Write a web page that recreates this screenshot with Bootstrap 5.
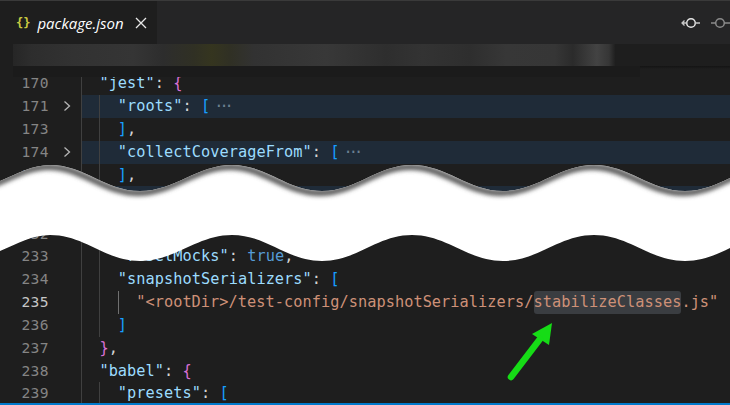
<!DOCTYPE html>
<html lang="en">
<head>
<meta charset="utf-8">
<title>package.json</title>
<link href="https://cdn.jsdelivr.net/npm/bootstrap@5.3.0/dist/css/bootstrap.min.css" rel="stylesheet">
<style>
body{background:#1e1e1e;overflow:hidden}
.shot{height:405px;width:730px;border-top:1px solid #3a3a3a}
.tabbar{height:43px;background:#252526;flex:none}
.edit-tab{width:157px;background:#1e1e1e;color:#fff;font:italic 15px "Open Sans",sans-serif}
.tab-icon{color:#cbcb41;font:bold 12px "DejaVu Sans Mono",monospace;margin:0 7px 0 16px}
.tab-close{margin-left:11px}
.act{margin-right:-1px;gap:8px;padding-right:0}
.crumbs{height:33px;flex:none;background:#1e1e1e;padding-left:13px}
.crumb-blur{width:602px;height:22px;background:linear-gradient(90deg,#262626 0,#2d2d2d 3%,#323232 10%,#353535 20%,#2d2d2d 25%,#303024 30%,#35351f 33%,#303024 36%,#323232 40%,#383838 52%,#2e2e2e 62%,#333333 68%,#2e2e2e 76%,#373737 82%,#363636 90%,#2b2b2b 93%,#434343 97%,#363636 99%,#202020 100%)}
.crumb-fade{height:11px;width:627px;background:#1b1b1b}
.crumb-edge{position:absolute;left:640px;right:0;top:22px;height:3px;background:linear-gradient(#141414,#1e1e1e)}
.editor{flex:1 1 auto;min-height:0;font:15.28px/22.83px "DejaVu Sans Mono",monospace;letter-spacing:.05px;color:#d4d4d4;margin-top:-4.8px}
.cline{height:22.83px;white-space:pre}
.ln{width:49px;text-align:right;color:#858585;flex:none;font-size:14.6px;letter-spacing:.4px}
.ln-on{color:#c6c6c6}
.fold{width:32px;flex:none;padding-left:14px}
.src{flex:1 1 auto;min-width:0}
.folded{background:#1f2b38}
.ig{display:inline-block;width:18.4px;height:22.83px;border-left:1px solid #404040;vertical-align:top}
.ig-on{border-left-color:#707070}
.second{margin-top:13.4px}
.k{color:#9cdcfe}.s{color:#ce9178}.t{color:#569cd6}.b1{color:#da70d6}.b2{color:#179fff}
.dots{color:#6b7f90;letter-spacing:-4px;margin-left:4px}
.hit{background:#3a3d41;border-radius:3px;display:inline-block}
.statusline{height:2px;background:#007acc;flex:none;position:relative}
.tear{position:absolute;left:0;top:0;width:730px;height:405px;pointer-events:none}
</style>
</head>
<body class="m-0">
<div class="shot d-flex flex-column position-relative overflow-hidden">
  <div class="tabbar d-flex justify-content-between align-items-center">
    <div class="edit-tab h-100 d-flex align-items-center"><span class="tab-icon">{}</span><span>package.json</span>
      <svg class="tab-close" width="12" height="12" viewBox="0 0 12 12"><path d="M1 1 11 11M11 1 1 11" stroke="#e8e8e8" stroke-width="1.3" fill="none"/></svg>
    </div>
    <div class="act d-flex align-items-center">
      <svg width="22" height="14" viewBox="0 0 22 14"><circle cx="11" cy="7" r="4.3" fill="none" stroke="#e6e6e6" stroke-width="1.5"/><path d="M15 7h5M7 7H2M4.500 4.500 2 7l2.500 2.500" fill="none" stroke="#c8c8c8" stroke-width="1.300"/></svg>
      <svg width="21" height="14" viewBox="0 0 21 14"><circle cx="10" cy="7" r="4.300" fill="none" stroke="#8a8a8a" stroke-width="1.500"/><path d="M1 7h5M14 7h7" fill="none" stroke="#8a8a8a" stroke-width="1.300"/></svg>
    </div>
  </div>
  <div class="crumbs position-relative">
    <div class="crumb-blur"></div>
    <div class="crumb-fade"></div>
    <div class="crumb-edge"></div>
  </div>
  <div class="editor overflow-hidden">
    <div class="cline d-flex"><span class="ln">170</span><span class="fold"></span><span class="src"><span class="ig"></span><span class="k">"jest"</span>: <span class="b1">{</span></span></div>
    <div class="cline d-flex"><span class="ln">171</span><span class="fold d-flex align-items-center"><svg width="9" height="12" viewBox="0 0 9 12"><path d="M1.500 1.500 6.500 6l-5 4.500" fill="none" stroke="#b5b5b5" stroke-width="1.300"/></svg></span><span class="src folded"><span class="ig"></span><span class="ig"></span><span class="k">"roots"</span>: <span class="b2">[</span><span class="dots">···</span></span></div>
    <div class="cline d-flex"><span class="ln">173</span><span class="fold"></span><span class="src"><span class="ig"></span><span class="ig"></span><span class="b2">]</span>,</span></div>
    <div class="cline d-flex"><span class="ln">174</span><span class="fold d-flex align-items-center"><svg width="9" height="12" viewBox="0 0 9 12"><path d="M1.500 1.500 6.500 6l-5 4.500" fill="none" stroke="#b5b5b5" stroke-width="1.300"/></svg></span><span class="src folded"><span class="ig"></span><span class="ig"></span><span class="k">"collectCoverageFrom"</span>: <span class="b2">[</span><span class="dots">···</span></span></div>
    <div class="cline d-flex"><span class="ln">175</span><span class="fold"></span><span class="src"><span class="ig"></span><span class="ig"></span><span class="b2">]</span>,</span></div>
    <div class="cline d-flex"><span class="ln"></span><span class="fold"></span><span class="src folded"><span class="ig"></span><span class="ig"></span></span></div>
    <div class="second">
      <div class="cline d-flex"><span class="ln">232</span><span class="fold"></span><span class="src"><span class="ig"></span><span class="ig"></span></span></div>
      <div class="cline d-flex"><span class="ln">233</span><span class="fold"></span><span class="src"><span class="ig"></span><span class="ig"></span><span class="k">"resetMocks"</span>: <span class="t">true</span>,</span></div>
      <div class="cline d-flex"><span class="ln">234</span><span class="fold"></span><span class="src"><span class="ig"></span><span class="ig"></span><span class="k">"snapshotSerializers"</span>: <span class="b2">[</span></span></div>
      <div class="cline d-flex"><span class="ln ln-on">235</span><span class="fold"></span><span class="src"><span class="ig"></span><span class="ig"></span><span class="ig ig-on"></span><span class="s">"&lt;rootDir&gt;/test-config/snapshotSerializers/<span class="hit">stabilizeClasses</span>.js"</span></span></div>
      <div class="cline d-flex"><span class="ln">236</span><span class="fold"></span><span class="src"><span class="ig"></span><span class="ig"></span><span class="b2">]</span></span></div>
      <div class="cline d-flex"><span class="ln">237</span><span class="fold"></span><span class="src"><span class="ig"></span><span class="b1">}</span>,</span></div>
      <div class="cline d-flex"><span class="ln">238</span><span class="fold"></span><span class="src"><span class="ig"></span><span class="k">"babel"</span>: <span class="b1">{</span></span></div>
      <div class="cline d-flex"><span class="ln">239</span><span class="fold"></span><span class="src"><span class="ig"></span><span class="ig"></span><span class="k">"presets"</span>: <span class="b2">[</span></span></div>
    </div>
  </div>
  <div class="statusline"></div>
  <svg class="tear" viewBox="0 0 730 405" aria-hidden="true">
    <defs>
      <filter id="soft" x="-5%" y="-50%" width="110%" height="200%"><feGaussianBlur stdDeviation="2.2"/></filter>
      <clipPath id="band"><path d="M-41 190C-5 190 20 164 50 164C85 164 105 190 140 190C175 190 197 164 232 164C267 164 287 190 322 190C357 190 377 164 412 164C447 164 468 190 503 190C538 190 559 164 594 164C629 164 650 190 685 190C720 190 740 164 775 164V234C740 234 720 260 685 260C650 260 629 234 594 234C559 234 538 260 503 260C468 260 447 234 412 234C377 234 357 260 322 260C287 260 267 234 232 234C197 234 175 260 140 260C105 260 85 234 50 234C20 234 -5 260 -41 260Z"/></clipPath>
    </defs>
    <g clip-path="url(#band)">
      <rect x="0" y="150" width="730" height="120" fill="#fff"/>
      <path d="M-41 190C-5 190 20 164 50 164C85 164 105 190 140 190C175 190 197 164 232 164C267 164 287 190 322 190C357 190 377 164 412 164C447 164 468 190 503 190C538 190 559 164 594 164C629 164 650 190 685 190C720 190 740 164 775 164" transform="translate(-2 2)" fill="none" stroke="#5a5a5a" stroke-width="6" filter="url(#soft)"/>
    </g>
    <path d="M552 322 532 333 549 344Z" fill="#16dc16"/>
    <path d="M540 338 511 376" fill="none" stroke="#16dc16" stroke-width="6.500" stroke-linecap="round"/>
  </svg>
</div>
</body>
</html>
